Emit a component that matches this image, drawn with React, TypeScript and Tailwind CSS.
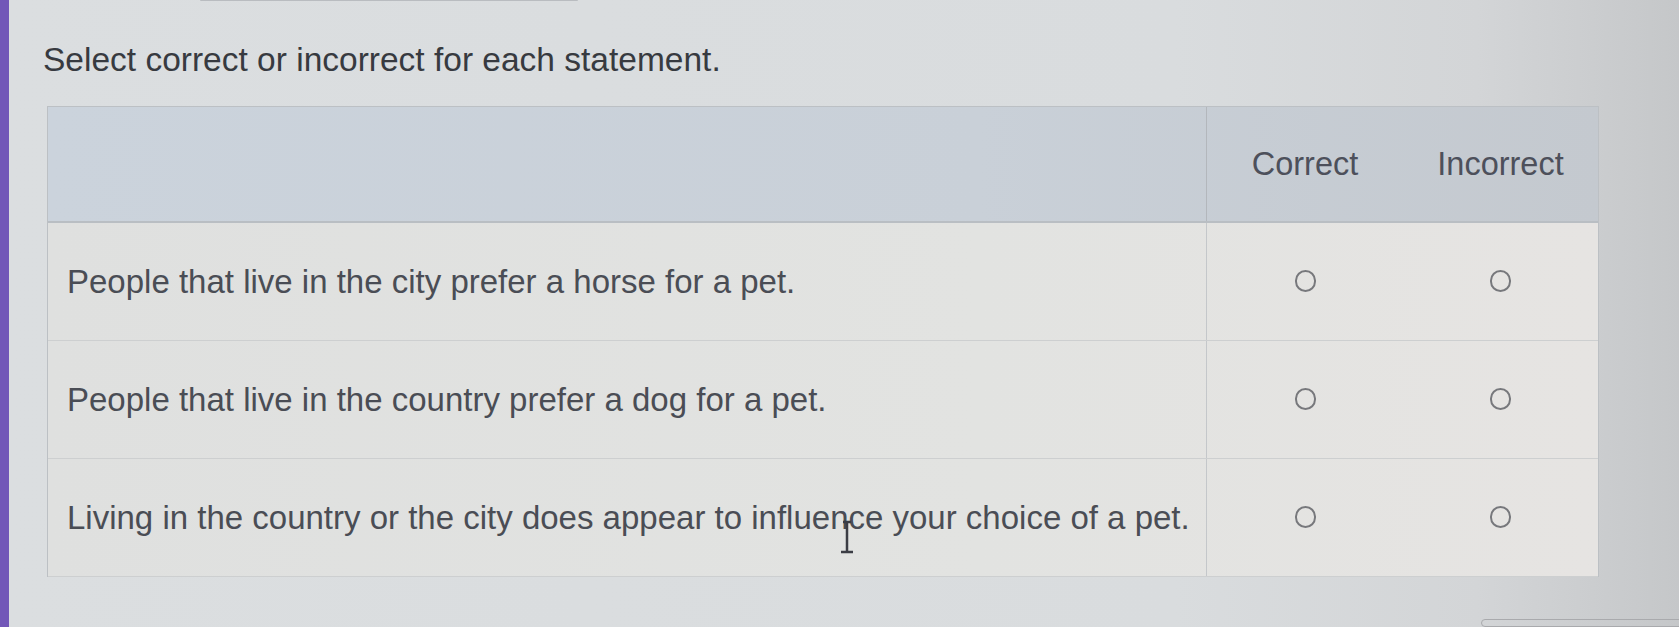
const statements = [
  "People that live in the city prefer a horse for a pet.",
  "People that live in the country prefer a dog for a pet.",
  "Living in the country or the city does appear to influence your choice of a pet.",
];

function Radio() {
  return (
    <span className="block h-[22px] w-[21px] rounded-full border-[2px] border-[#77787c]" />
  );
}

function TextCursor() {
  return (
    <svg
      className="pointer-events-none absolute left-[838px] top-[519px]"
      width="18"
      height="36"
      viewBox="0 0 18 36"
    >
      <path
        d="M5 3h8M9 3v30M3 33h12"
        stroke="#3b3d44"
        strokeWidth="2.5"
        fill="none"
      />
    </svg>
  );
}

export default function App() {
  return (
    <div className="relative flex h-[627px] w-full overflow-hidden bg-[linear-gradient(90deg,#dbdee0,#d9dcde_70%,#d3d5d7_88%,#c5c7c9)] font-['Liberation_Sans',Arial,sans-serif]">
      <div className="w-[9px] shrink-0 bg-[#7257b8]" />
      <div className="flex flex-1 flex-col">
        <div className="ml-[191px] h-[3px] w-[378px] rounded-b bg-[#b9bcc0]" />
        <h1 className="ml-[34px] mt-[43px] text-[33.5px] leading-none text-[#373a40]">
          Select correct or incorrect for each statement.
        </h1>
        <div className="ml-[38px] mt-[29px] w-[1552px] border-x border-t border-[#bcc0c4]">
          <div className="grid h-[116px] grid-cols-[1159px_196px_195px] border-b-2 border-[#b9bec3] bg-[linear-gradient(90deg,#cbd3dc,#c9d0d8_60%,#c4c9cf)] text-[32.5px] text-[#4d505b]">
            <div className="border-r border-[#b3b7bc]" />
            <div className="flex items-center justify-center">Correct</div>
            <div className="flex items-center justify-center">Incorrect</div>
          </div>
          {statements.map((text, i) => (
            <div
              key={i}
              className="grid h-[118px] grid-cols-[1159px_196px_195px] border-b border-[#cdcfd0] bg-[linear-gradient(90deg,#dfe0df,#e2e3e1_60%,#e6e4e2)]"
            >
              <div className="flex items-center whitespace-nowrap border-r border-[#c4c7ca] pl-[19px] text-[33px] text-[#4a4d55]">
                {text}
              </div>
              <div className="flex items-center justify-center">
                <Radio />
              </div>
              <div className="flex items-center justify-center">
                <Radio />
              </div>
            </div>
          ))}
        </div>
        <div className="ml-[1472px] mt-[42px] h-[40px] w-[220px] rounded-md border border-[#a9aaad]" />
      </div>
      <TextCursor />
    </div>
  );
}
